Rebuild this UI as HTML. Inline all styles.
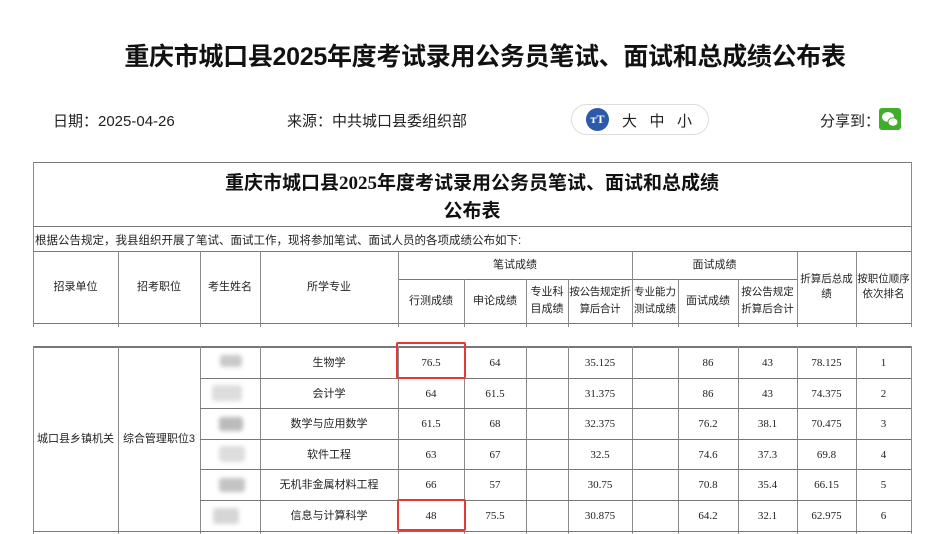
<!DOCTYPE html>
<html><head><meta charset="utf-8"><style>
*{margin:0;padding:0;box-sizing:border-box}
body{width:926px;height:534px;background:#fff;position:relative;overflow:hidden;font-family:"Liberation Sans","Noto Sans CJK SC",sans-serif;color:#222}
.a{position:absolute}
.h{position:absolute;height:1px;background:#777}
.v{position:absolute;width:1px;background:#8a8a8a}
.t{position:absolute;font-size:11px;text-align:center;line-height:15px;display:flex;align-items:center;justify-content:center;color:#222;white-space:nowrap}
.n{font-family:"Liberation Serif","Noto Serif CJK SC",serif;font-size:11px}
.blob{position:absolute;background:#c9c9c9;filter:blur(2px);border-radius:3px}
.red{position:absolute;border:2px solid #e53935;border-radius:2px}
</style></head><body>
<div class="a" style="left:115px;top:37px;width:740px;text-align:center;font-size:25px;font-weight:bold;color:#111;white-space:nowrap;letter-spacing:-0.3px">重庆市城口县2025年度考试录用公务员笔试、面试和总成绩公布表</div>
<div class="a" style="left:53px;top:110px;font-size:15px">日期：2025-04-26</div>
<div class="a" style="left:287px;top:110px;font-size:15px">来源：中共城口县委组织部</div>
<div class="a" style="left:571px;top:104px;width:138px;height:31px;border:1px solid #ddd;border-radius:16px"></div>
<div class="a" style="left:586px;top:108px;width:23px;height:23px;border-radius:50%;background:#2b5aa8;color:#fff;font-size:12px;font-weight:bold;text-align:center;line-height:23px;font-family:'Liberation Serif',serif">тT</div>
<div class="a" style="left:622px;top:110px;font-size:15px;letter-spacing:0">大&nbsp;&nbsp;&nbsp;中&nbsp;&nbsp;&nbsp;小</div>
<div class="a" style="left:820px;top:110px;font-size:15px">分享到：</div>
<div class="a" style="left:879px;top:108px;width:22px;height:22px;border-radius:3px;background:#3fae29"><svg width="22" height="22"><ellipse cx="9" cy="9" rx="6" ry="5" fill="#fff"/><ellipse cx="14" cy="14" rx="5" ry="4.2" fill="#fff" stroke="#3fae29" stroke-width="1"/></svg></div>

<div class="h" style="left:33px;top:162px;width:879px"></div>
<div class="v" style="left:33px;top:162px;height:162px"></div>
<div class="v" style="left:911px;top:162px;height:162px"></div>
<div class="a" style="left:33px;top:170px;width:878px;text-align:center;font-size:19px;font-weight:bold;color:#111;line-height:28px;font-family:'Liberation Serif','Noto Sans CJK SC',serif">重庆市城口县2025年度考试录用公务员笔试、面试和总成绩<br>公布表</div>
<div class="h" style="left:33px;top:226px;width:879px"></div>
<div class="a" style="left:35px;top:232px;font-size:11.5px;white-space:nowrap">根据公告规定，我县组织开展了笔试、面试工作，现将参加笔试、面试人员的各项成绩公布如下:</div>
<div class="h" style="left:33px;top:251px;width:879px"></div>
<div class="h" style="left:398px;top:279px;width:399px"></div>
<div class="h" style="left:33px;top:323px;width:879px"></div>
<div class="v" style="left:118px;top:251px;height:76px"></div>
<div class="v" style="left:200px;top:251px;height:76px"></div>
<div class="v" style="left:260px;top:251px;height:76px"></div>
<div class="v" style="left:398px;top:251px;height:76px"></div>
<div class="v" style="left:632px;top:251px;height:76px"></div>
<div class="v" style="left:797px;top:251px;height:76px"></div>
<div class="v" style="left:856px;top:251px;height:76px"></div>
<div class="v" style="left:33px;top:251px;height:76px"></div>
<div class="v" style="left:911px;top:251px;height:76px"></div>
<div class="v" style="left:464px;top:279px;height:48px"></div>
<div class="v" style="left:526px;top:279px;height:48px"></div>
<div class="v" style="left:568px;top:279px;height:48px"></div>
<div class="v" style="left:678px;top:279px;height:48px"></div>
<div class="v" style="left:738px;top:279px;height:48px"></div>
<div class="t" style="left:33px;top:251px;width:85px;height:72px">招录单位</div>
<div class="t" style="left:118px;top:251px;width:82px;height:72px">招考职位</div>
<div class="t" style="left:200px;top:251px;width:60px;height:72px">考生姓名</div>
<div class="t" style="left:260px;top:251px;width:138px;height:72px">所学专业</div>
<div class="t" style="left:398px;top:251px;width:234px;height:28px">笔试成绩</div>
<div class="t" style="left:632px;top:251px;width:165px;height:28px">面试成绩</div>
<div class="t" style="left:797px;top:251px;width:59px;height:72px;font-size:10.5px">折算后总成<br>绩</div>
<div class="t" style="left:856px;top:251px;width:55px;height:72px;font-size:10.5px">按职位顺序<br>依次排名</div>
<div class="t" style="left:398px;top:279px;width:66px;height:44px">行测成绩</div>
<div class="t" style="left:464px;top:279px;width:62px;height:44px">申论成绩</div>
<div class="t" style="left:526px;top:279px;width:42px;height:44px;line-height:17px">专业科<br>目成绩</div>
<div class="t" style="left:568px;top:279px;width:64px;height:44px;line-height:17px;font-size:10.5px;letter-spacing:-0.3px">按公告规定折<br>算后合计</div>
<div class="t" style="left:632px;top:279px;width:46px;height:44px;line-height:17px;font-size:10.5px">专业能力<br>测试成绩</div>
<div class="t" style="left:678px;top:279px;width:60px;height:44px">面试成绩</div>
<div class="t" style="left:738px;top:279px;width:59px;height:44px;line-height:17px;font-size:10.5px">按公告规定<br>折算后合计</div>

<div class="h" style="left:33px;top:346px;width:879px;height:2px"></div>
<div class="v" style="left:33px;top:346px;height:188px"></div>
<div class="v" style="left:118px;top:346px;height:188px"></div>
<div class="v" style="left:200px;top:346px;height:188px"></div>
<div class="v" style="left:260px;top:346px;height:188px"></div>
<div class="v" style="left:398px;top:346px;height:188px"></div>
<div class="v" style="left:464px;top:346px;height:188px"></div>
<div class="v" style="left:526px;top:346px;height:188px"></div>
<div class="v" style="left:568px;top:346px;height:188px"></div>
<div class="v" style="left:632px;top:346px;height:188px"></div>
<div class="v" style="left:678px;top:346px;height:188px"></div>
<div class="v" style="left:738px;top:346px;height:188px"></div>
<div class="v" style="left:797px;top:346px;height:188px"></div>
<div class="v" style="left:856px;top:346px;height:188px"></div>
<div class="v" style="left:911px;top:346px;height:188px"></div>
<div class="h" style="left:200px;top:378px;width:711px"></div>
<div class="h" style="left:200px;top:408px;width:711px"></div>
<div class="h" style="left:200px;top:439px;width:711px"></div>
<div class="h" style="left:200px;top:469px;width:711px"></div>
<div class="h" style="left:200px;top:500px;width:711px"></div>
<div class="h" style="left:33px;top:531px;width:879px"></div>
<div class="t" style="left:33px;top:347px;width:85px;height:184px">城口县乡镇机关</div>
<div class="t" style="left:118px;top:347px;width:82px;height:184px">综合管理职位3</div>

<div class="blob" style="left:220px;top:355px;width:22px;height:12px"></div>
<div class="blob" style="left:212px;top:385px;width:30px;height:16px;background:#ddd"></div>
<div class="blob" style="left:219px;top:417px;width:24px;height:14px;background:#bbb"></div>
<div class="blob" style="left:219px;top:446px;width:26px;height:16px;background:#ddd"></div>
<div class="blob" style="left:219px;top:478px;width:26px;height:14px;background:#c4c4c4"></div>
<div class="blob" style="left:213px;top:508px;width:26px;height:16px;background:#d6d6d6"></div>

<div class="t" style="left:260px;top:348px;width:138px;height:30px">生物学</div>
<div class="t" style="left:260px;top:379px;width:138px;height:30px">会计学</div>
<div class="t" style="left:260px;top:409px;width:138px;height:30px">数学与应用数学</div>
<div class="t" style="left:260px;top:440px;width:138px;height:30px">软件工程</div>
<div class="t" style="left:260px;top:470px;width:138px;height:30px">无机非金属材料工程</div>
<div class="t" style="left:260px;top:501px;width:138px;height:30px">信息与计算科学</div>

<div class="t n" style="left:398px;top:348px;width:66px;height:30px">76.5</div>
<div class="t n" style="left:398px;top:379px;width:66px;height:30px">64</div>
<div class="t n" style="left:398px;top:409px;width:66px;height:30px">61.5</div>
<div class="t n" style="left:398px;top:440px;width:66px;height:30px">63</div>
<div class="t n" style="left:398px;top:470px;width:66px;height:30px">66</div>
<div class="t n" style="left:398px;top:501px;width:66px;height:30px">48</div>

<div class="t n" style="left:464px;top:348px;width:62px;height:30px">64</div>
<div class="t n" style="left:464px;top:379px;width:62px;height:30px">61.5</div>
<div class="t n" style="left:464px;top:409px;width:62px;height:30px">68</div>
<div class="t n" style="left:464px;top:440px;width:62px;height:30px">67</div>
<div class="t n" style="left:464px;top:470px;width:62px;height:30px">57</div>
<div class="t n" style="left:464px;top:501px;width:62px;height:30px">75.5</div>

<div class="t n" style="left:568px;top:348px;width:64px;height:30px">35.125</div>
<div class="t n" style="left:568px;top:379px;width:64px;height:30px">31.375</div>
<div class="t n" style="left:568px;top:409px;width:64px;height:30px">32.375</div>
<div class="t n" style="left:568px;top:440px;width:64px;height:30px">32.5</div>
<div class="t n" style="left:568px;top:470px;width:64px;height:30px">30.75</div>
<div class="t n" style="left:568px;top:501px;width:64px;height:30px">30.875</div>

<div class="t n" style="left:678px;top:348px;width:60px;height:30px">86</div>
<div class="t n" style="left:678px;top:379px;width:60px;height:30px">86</div>
<div class="t n" style="left:678px;top:409px;width:60px;height:30px">76.2</div>
<div class="t n" style="left:678px;top:440px;width:60px;height:30px">74.6</div>
<div class="t n" style="left:678px;top:470px;width:60px;height:30px">70.8</div>
<div class="t n" style="left:678px;top:501px;width:60px;height:30px">64.2</div>

<div class="t n" style="left:738px;top:348px;width:59px;height:30px">43</div>
<div class="t n" style="left:738px;top:379px;width:59px;height:30px">43</div>
<div class="t n" style="left:738px;top:409px;width:59px;height:30px">38.1</div>
<div class="t n" style="left:738px;top:440px;width:59px;height:30px">37.3</div>
<div class="t n" style="left:738px;top:470px;width:59px;height:30px">35.4</div>
<div class="t n" style="left:738px;top:501px;width:59px;height:30px">32.1</div>

<div class="t n" style="left:797px;top:348px;width:59px;height:30px">78.125</div>
<div class="t n" style="left:797px;top:379px;width:59px;height:30px">74.375</div>
<div class="t n" style="left:797px;top:409px;width:59px;height:30px">70.475</div>
<div class="t n" style="left:797px;top:440px;width:59px;height:30px">69.8</div>
<div class="t n" style="left:797px;top:470px;width:59px;height:30px">66.15</div>
<div class="t n" style="left:797px;top:501px;width:59px;height:30px">62.975</div>

<div class="t n" style="left:856px;top:348px;width:55px;height:30px">1</div>
<div class="t n" style="left:856px;top:379px;width:55px;height:30px">2</div>
<div class="t n" style="left:856px;top:409px;width:55px;height:30px">3</div>
<div class="t n" style="left:856px;top:440px;width:55px;height:30px">4</div>
<div class="t n" style="left:856px;top:470px;width:55px;height:30px">5</div>
<div class="t n" style="left:856px;top:501px;width:55px;height:30px">6</div>

<div class="red" style="left:396px;top:342px;width:70px;height:37px"></div>
<div class="red" style="left:397px;top:499px;width:69px;height:32px"></div>
</body></html>
